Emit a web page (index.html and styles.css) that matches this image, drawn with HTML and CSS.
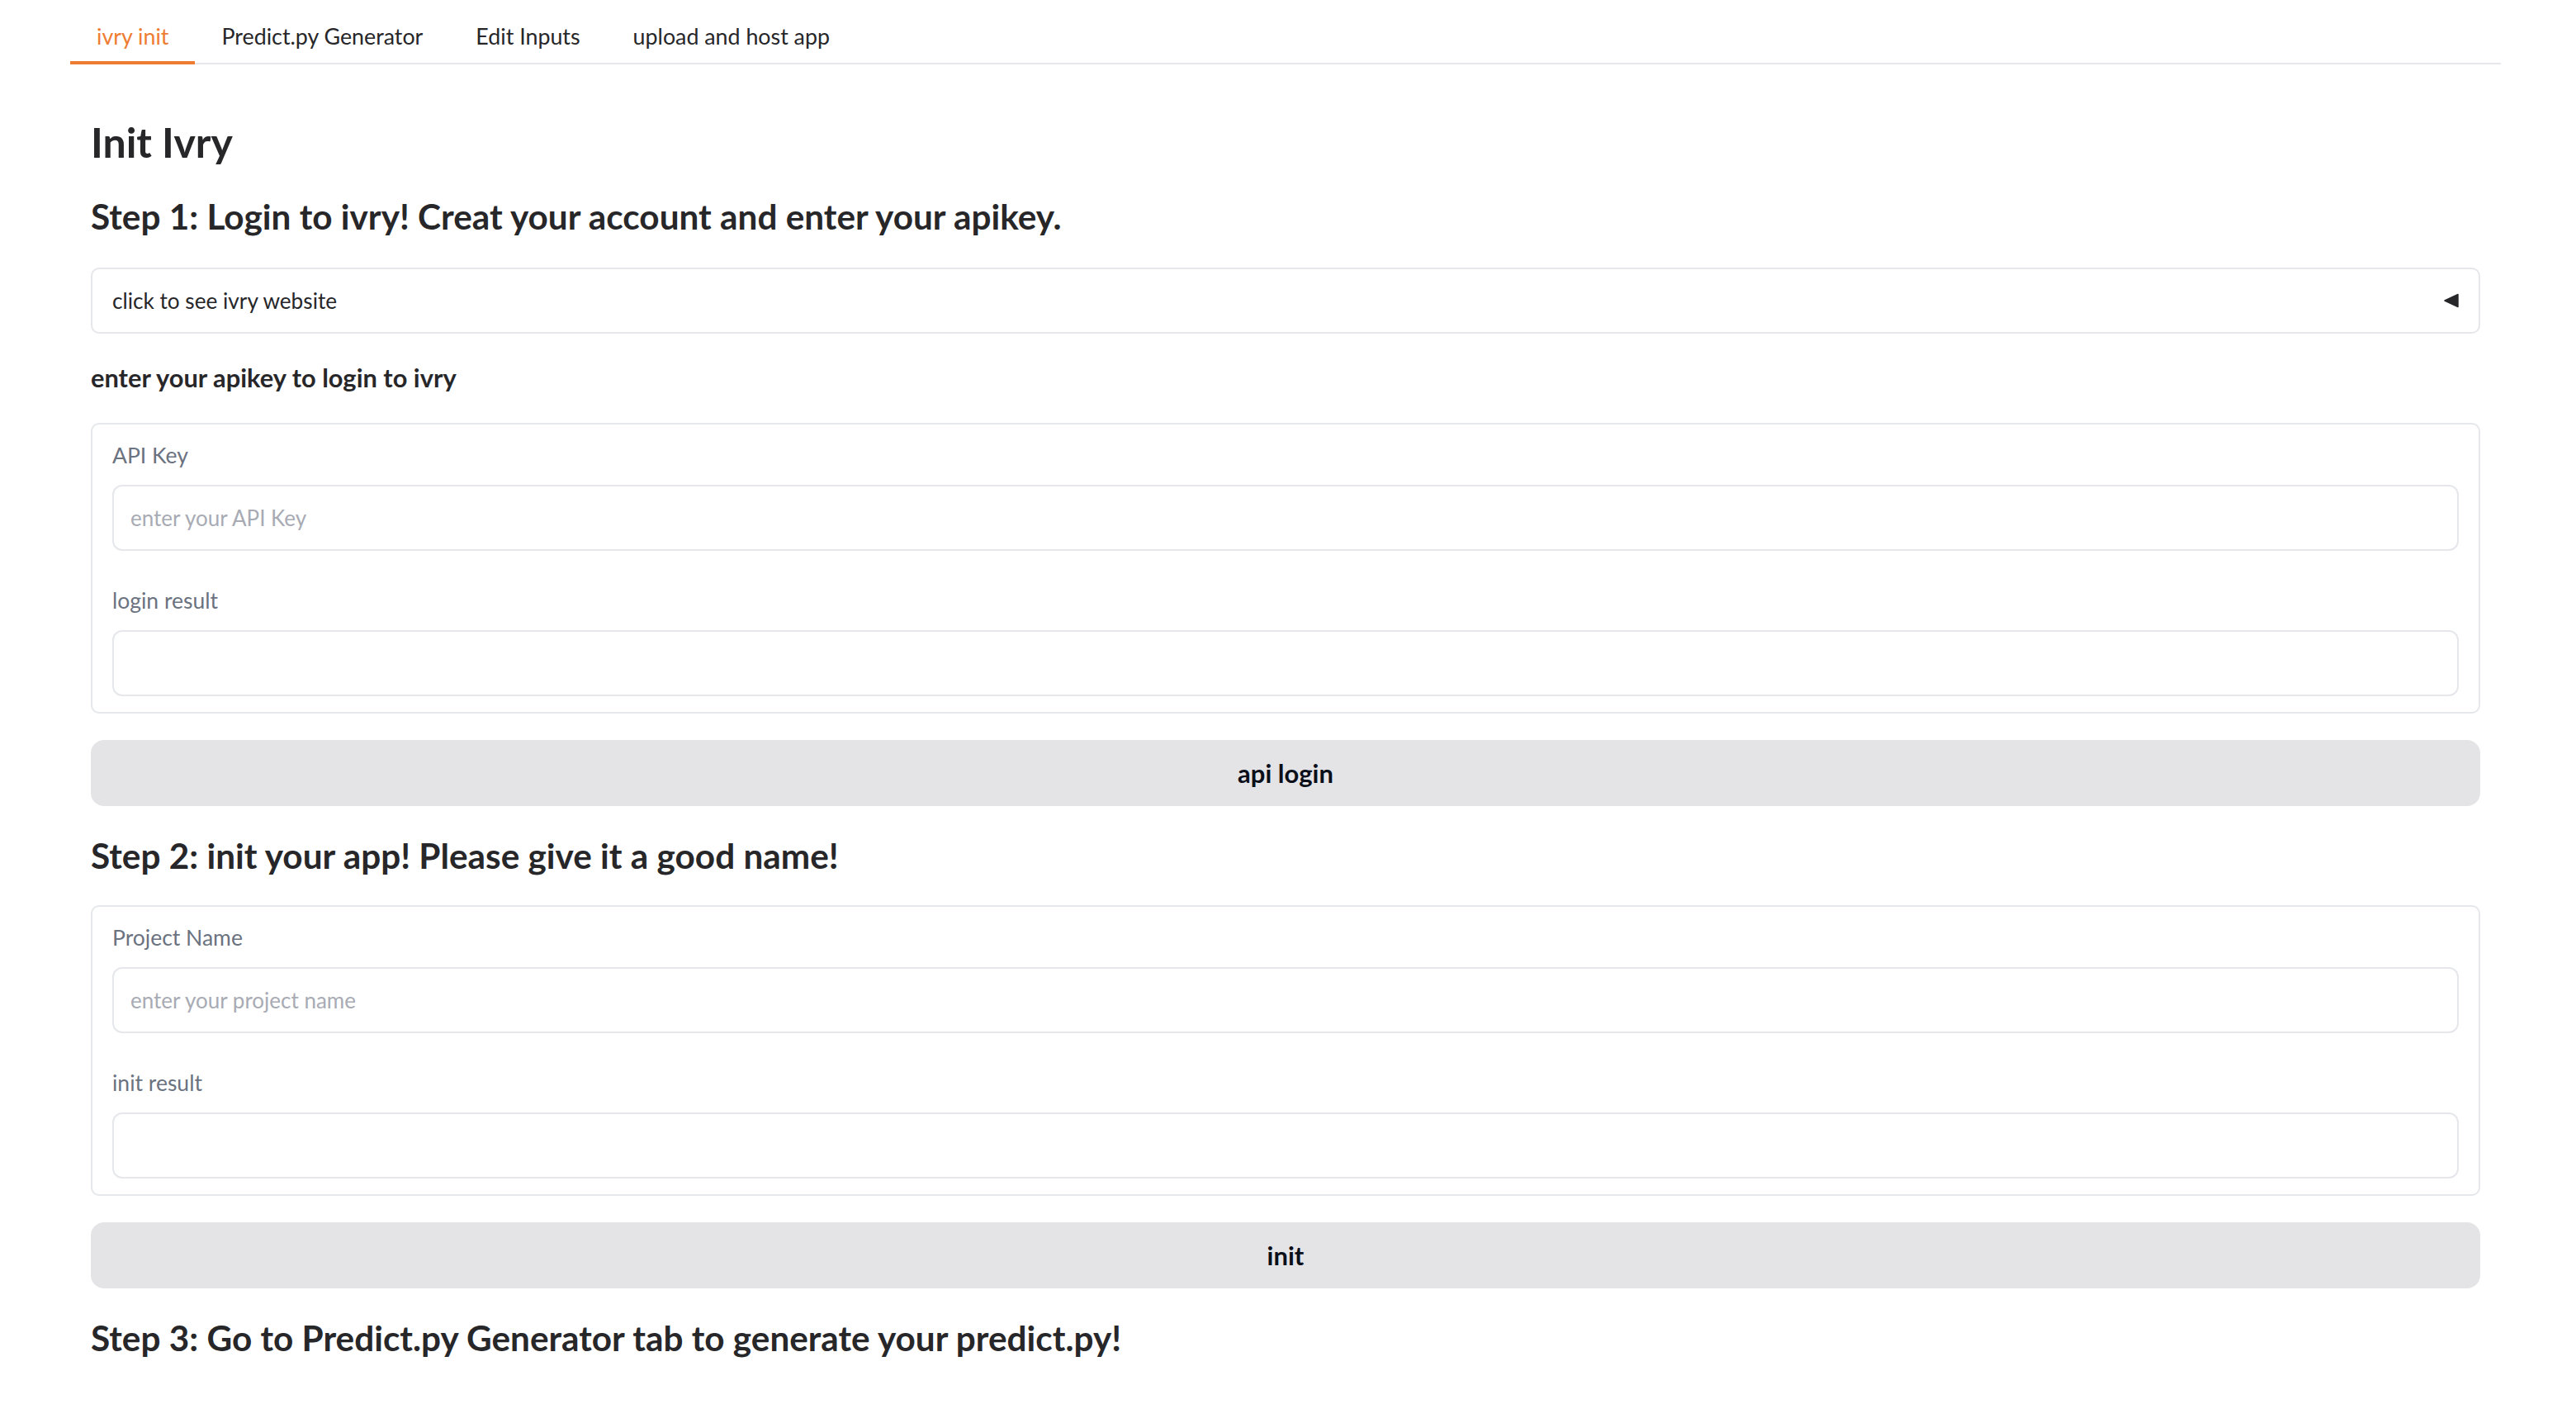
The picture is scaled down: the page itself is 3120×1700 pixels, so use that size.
FILE: index.html
```html
<!DOCTYPE html>
<html lang="en">
<head>
<meta charset="utf-8">
<title>Init Ivry</title>
<link rel="stylesheet" href="styles.css">
</head>
<body>
<div class="tabs">
  <div class="tab-nav">
    <button class="tab selected">ivry init</button>
    <button class="tab">Predict.py Generator</button>
    <button class="tab">Edit Inputs</button>
    <button class="tab">upload and host app</button>
  </div>
  <div class="tab-content">
    <div class="md-head">
      <h1>Init Ivry</h1>
      <h2>Step 1: Login to ivry! Creat your account and enter your apikey.</h2>
    </div>
    <div class="accordion">
      <span class="acc-label">click to see ivry website</span>
      <svg class="acc-icon" width="18" height="18" viewBox="0 0 18 18"><polygon points="17,1.5 17,16.5 1,9" fill="#27272a" stroke="#27272a" stroke-width="1.5" stroke-linejoin="round"/></svg>
    </div>
    <h3 class="md-strong">enter your apikey to login to ivry</h3>
    <div class="block">
      <label class="field">
        <span class="field-label">API Key</span>
        <input class="field-input" type="text" placeholder="enter your API Key">
      </label>
      <label class="field">
        <span class="field-label">login result</span>
        <input class="field-input" type="text">
      </label>
    </div>
    <button class="btn">api login</button>
    <h2>Step 2: init your app! Please give it a good name!</h2>
    <div class="block">
      <label class="field">
        <span class="field-label">Project Name</span>
        <input class="field-input" type="text" placeholder="enter your project name">
      </label>
      <label class="field">
        <span class="field-label">init result</span>
        <input class="field-input" type="text">
      </label>
    </div>
    <button class="btn">init</button>
    <h2>Step 3: Go to Predict.py Generator tab to generate your predict.py!</h2>
  </div>
</div>
</body>
</html>
```
FILE: styles.css
```css
* { box-sizing: border-box; }
html, body {
  margin: 0;
  padding: 0;
  background: #ffffff;
}
body {
  font-family: "Lato", "Liberation Sans", sans-serif;
  color: #27272a;
  width: 3120px;
  height: 1700px;
  overflow: hidden;
}
.tabs {
  margin: 0 91px 0 85px;
  padding-top: 6px;
}
.tab-nav {
  display: flex;
  border-bottom: 2px solid #e5e7eb;
}
.tab {
  font-family: inherit;
  font-size: 26.8px;
  line-height: 42px;
  color: #27272a;
  background: none;
  border: none;
  border-bottom: 4px solid transparent;
  margin-bottom: -2px;
  padding: 17px 32px 9px;
  cursor: pointer;
}
.tab.selected {
  color: #ee7c33;
  border-bottom-color: #ee7c33;
}
.tab-content {
  display: flex;
  flex-direction: column;
  gap: 32px;
  padding: 62px 25px 0;
}
h1, h2, h3, p { margin: 0; }
.md-head h1 {
  font-size: 50px;
  line-height: 64px;
  font-weight: 700;
}
.md-head h2 {
  margin-top: 28px;
  line-height: 60px;
}
h2 {
  font-size: 42.3px;
  line-height: 56px;
  font-weight: 700;
}
.accordion {
  display: flex;
  align-items: center;
  justify-content: space-between;
  height: 80px;
  padding: 0 24px;
  border: 2px solid #e5e7eb;
  border-radius: 10px;
}
.acc-label {
  font-size: 26.2px;
  line-height: 40px;
}
.acc-icon { display: block; }
.md-strong {
  font-size: 30.8px;
  line-height: 44px;
  font-weight: 700;
}
.block {
  display: flex;
  flex-direction: column;
  gap: 40px;
  padding: 17px 24px 19px;
  border: 2px solid #e5e7eb;
  border-radius: 10px;
}
.field {
  display: flex;
  flex-direction: column;
  gap: 16px;
}
.field-label {
  font-size: 26.5px;
  line-height: 40px;
  color: #6b7280;
}
.field-input {
  height: 80px;
  width: 100%;
  padding: 0 20px;
  font-family: inherit;
  font-size: 26px;
  color: #27272a;
  border: 2px solid #e5e7eb;
  border-radius: 12px;
  background: #ffffff;
  outline: none;
}
.field-input::placeholder { color: #a8abb4; }
.btn {
  height: 80px;
  width: 100%;
  font-family: inherit;
  font-size: 31px;
  font-weight: 700;
  color: #0b0f19;
  background: #e4e4e7;
  border: none;
  border-radius: 16px;
}
```
